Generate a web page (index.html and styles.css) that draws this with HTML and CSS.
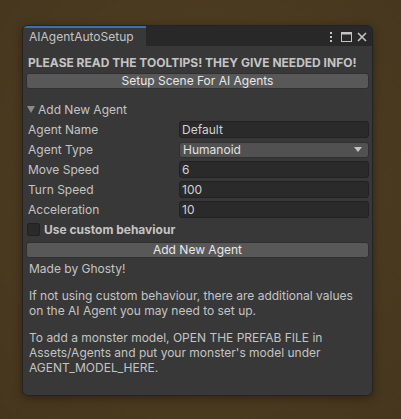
FILE: index.html
```html
<!DOCTYPE html>
<html>
<head>
<meta charset="utf-8">
<link rel="stylesheet" href="styles.css">
</head>
<body>
<div class="window">
  <div class="titlebar">
    <div class="tab">AIAgentAutoSetup</div>
    <div class="controls">
      <svg class="kebab" width="4" height="10" viewBox="0 0 4 10"><rect x="1" y="0" width="2" height="2" fill="#c4c4c4"/><rect x="1" y="4" width="2" height="2" fill="#c4c4c4"/><rect x="1" y="8" width="2" height="2" fill="#c4c4c4"/></svg>
      <svg class="max" width="11" height="10" viewBox="0 0 11 10"><rect x="0.5" y="0.5" width="10" height="9" fill="none" stroke="#c4c4c4"/><rect x="0.5" y="0.5" width="10" height="2" fill="#c4c4c4"/></svg>
      <svg class="close" width="10" height="10" viewBox="0 0 10 10"><path d="M1 1 L9 9 M9 1 L1 9" stroke="#c4c4c4" stroke-width="1.6"/></svg>
    </div>
  </div>
  <div class="content">
    <div class="heading">PLEASE READ THE TOOLTIPS! THEY GIVE NEEDED INFO!</div>
    <div class="button">Setup Scene For AI Agents</div>
    <div class="foldout"><span class="tri"></span>Add New Agent</div>
    <div class="row"><span class="label">Agent Name</span><span class="field">Default</span></div>
    <div class="row"><span class="label">Agent Type</span><span class="dropdown">Humanoid<span class="arrow"></span></span></div>
    <div class="row"><span class="label">Move Speed</span><span class="field">6</span></div>
    <div class="row"><span class="label">Turn Speed</span><span class="field">100</span></div>
    <div class="row"><span class="label">Acceleration</span><span class="field">10</span></div>
    <div class="checkrow"><span class="checkbox"></span><span class="boldlabel">Use custom behaviour</span></div>
    <div class="button">Add New Agent</div>
    <p class="text first">Made by Ghosty!</p>
    <p class="text second">If not using custom behaviour, there are additional values on the AI Agent you may need to set up.</p>
    <p class="text third">To add a monster model, OPEN THE PREFAB FILE in Assets/Agents and put your monster's model under AGENT_MODEL_HERE.</p>
  </div>
</div>
</body>
</html>
```
FILE: styles.css
```css
html, body {
  margin: 0;
  padding: 0;
}
body {
  width: 401px;
  height: 419px;
  background: radial-gradient(ellipse at 50% 45%, #4f3e22 0%, #4a3a20 60%, #45361d 100%);
  font-family: Inter, "Noto Sans", sans-serif;
  font-size: 12px;
  color: #c4c4c4;
  overflow: hidden;
  padding-top: 25px;
  box-sizing: border-box;
}
.window {
  margin-left: 22px;
  width: 351px;
  height: 371px;
  background: #383838;
  border: 1px solid #232323;
  border-radius: 6px;
  overflow: hidden;
  box-sizing: border-box;
  box-shadow: 0 2px 10px rgba(0,0,0,0.35);
}
.titlebar {
  height: 20px;
  background: #282828;
  display: flex;
  align-items: stretch;
}
.tab {
  width: 123px;
  background: #383838;
  border-top: 2px solid #3a72b0;
  box-sizing: border-box;
  padding-left: 6px;
  line-height: 18px;
  color: #c4c4c4;
  font-size: 12px;
}
.controls {
  margin-left: auto;
  display: flex;
  align-items: center;
  padding-right: 5px;
}
.kebab { margin-right: 8px; margin-top: 1px; }
.max { margin-right: 5px; margin-top: 1px; }
.close { margin-top: 1px; }
.content {
  padding: 8px 3px 0 3px;
}
.heading {
  font-weight: bold;
  height: 18px;
  line-height: 18px;
  padding-left: 2px;
}
.button {
  height: 16px;
  box-sizing: border-box;
  background: #585858;
  border: 1px solid #303030;
  border-radius: 3px;
  color: #e8e8e8;
  text-align: center;
  line-height: 14px;
  margin-top: 1px;
}
.foldout {
  margin-top: 12px;
  height: 17px;
  line-height: 17px;
  display: flex;
  align-items: center;
  color: #c4c4c4;
}
.tri {
  width: 0;
  height: 0;
  border-left: 4px solid transparent;
  border-right: 4px solid transparent;
  border-top: 7px solid #8a8a8a;
  margin-left: 1px;
  margin-right: 3px;
}
.row {
  display: flex;
  align-items: center;
  height: 17px;
  margin-top: 3px;
}
.label {
  width: 152px;
  padding-left: 2px;
}
.field {
  width: 191px;
  height: 17px;
  box-sizing: border-box;
  background: #2a2a2a;
  border: 1px solid #212121;
  border-radius: 3px;
  padding-left: 2px;
  line-height: 15px;
  color: #d2d2d2;
}
.dropdown {
  width: 191px;
  height: 16px;
  box-sizing: border-box;
  background: #515151;
  border: 1px solid #303030;
  border-radius: 3px;
  padding-left: 3px;
  line-height: 14px;
  color: #e0e0e0;
  display: flex;
  align-items: center;
}
.arrow {
  margin-left: auto;
  margin-right: 6px;
  width: 0;
  height: 0;
  border-left: 4px solid transparent;
  border-right: 4px solid transparent;
  border-top: 5px solid #c4c4c4;
}
.checkrow {
  display: flex;
  align-items: center;
  height: 18px;
  margin-top: 2px;
}
.checkbox {
  width: 13px;
  height: 13px;
  box-sizing: border-box;
  background: #2a2a2a;
  border: 1px solid #212121;
  border-radius: 2px;
  margin-left: 1px;
  margin-right: 4px;
}
.boldlabel {
  font-weight: bold;
}
.checkrow + .button {
  margin-top: 4px;
}
.text {
  margin: 0;
  padding-left: 3px;
  line-height: 15px;
  color: #c4c4c4;
}
.text.first {
  margin-top: 3px;
}
.text.second {
  margin-top: 12px;
}
.text.third {
  margin-top: 12px;
}
```
